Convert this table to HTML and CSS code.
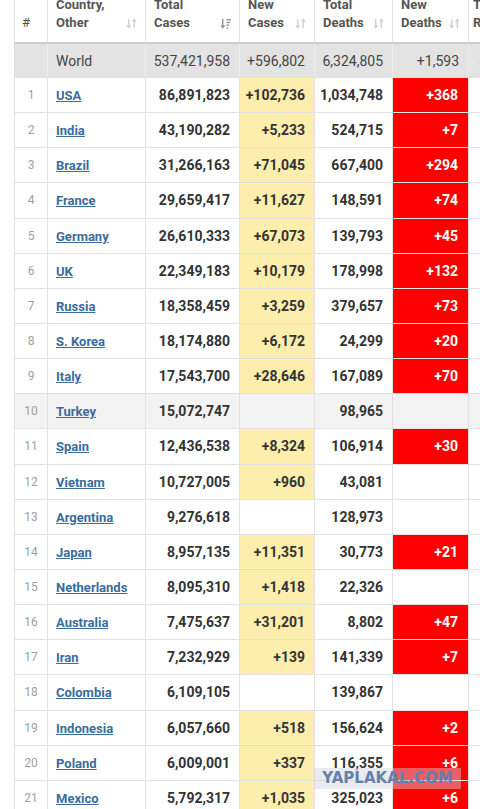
FILE: index.html
```html
<!DOCTYPE html>
<html lang="en">
<head>
  <meta charset="utf-8" />
  <title>Coronavirus Cases</title>
  <meta name="viewport" content="width=device-width, initial-scale=1" />
  <link rel="stylesheet" href="styles.css">
</head>
<body>
  <div class="page">
    <table class="main-table">
      <colgroup>
        <col class="c-rank" />
        <col class="c-country" />
        <col class="c-cases" />
        <col class="c-newcases" />
        <col class="c-deaths" />
        <col class="c-newdeaths" />
        <col class="c-recovered" />
      </colgroup>
      <thead>
        <tr>
          <th class="rank-head"><div class="th-wrap"><span>#</span></div></th>
          <th><div class="th-wrap"><span>Country,<br>Other</span>
            <svg class="sort" viewBox="0 0 12 12"><path d="M3 1v9M1 8l2 2.5L5 8M9 11V2M7 4l2-2.5L11 4" /></svg></div></th>
          <th><div class="th-wrap"><span>Total<br>Cases</span>
            <svg class="sort active" viewBox="0 0 12 12"><path d="M3 1v9M1 8l2 2.5L5 8" /><path class="bars" d="M7 2h5M7 5h4M7 8h3M7 11h2" /></svg></div></th>
          <th><div class="th-wrap"><span>New<br>Cases</span>
            <svg class="sort" viewBox="0 0 12 12"><path d="M3 1v9M1 8l2 2.5L5 8M9 11V2M7 4l2-2.5L11 4" /></svg></div></th>
          <th><div class="th-wrap"><span>Total<br>Deaths</span>
            <svg class="sort" viewBox="0 0 12 12"><path d="M3 1v9M1 8l2 2.5L5 8M9 11V2M7 4l2-2.5L11 4" /></svg></div></th>
          <th><div class="th-wrap"><span>New<br>Deaths</span>
            <svg class="sort" viewBox="0 0 12 12"><path d="M3 1v9M1 8l2 2.5L5 8M9 11V2M7 4l2-2.5L11 4" /></svg></div></th>
          <th class="rec-head"><div class="th-wrap"><span>Total<br>Recovered</span></div></th>
        </tr>
      </thead>
      <tbody>
        <tr class="world">
          <td></td>
          <td class="name">World</td>
          <td>537,421,958</td>
          <td>+596,802</td>
          <td>6,324,805</td>
          <td>+1,593</td>
          <td class="rec">511,703,826</td>
        </tr>
        <tr><td class="rank">1</td><td class="name"><a href="#">USA</a></td><td>86,891,823</td><td class="newc">+102,736</td><td>1,034,748</td><td class="newd">+368</td><td></td></tr>
        <tr><td class="rank">2</td><td class="name"><a href="#">India</a></td><td>43,190,282</td><td class="newc">+5,233</td><td>524,715</td><td class="newd">+7</td><td></td></tr>
        <tr><td class="rank">3</td><td class="name"><a href="#">Brazil</a></td><td>31,266,163</td><td class="newc">+71,045</td><td>667,400</td><td class="newd">+294</td><td></td></tr>
        <tr><td class="rank">4</td><td class="name"><a href="#">France</a></td><td>29,659,417</td><td class="newc">+11,627</td><td>148,591</td><td class="newd">+74</td><td></td></tr>
        <tr><td class="rank">5</td><td class="name"><a href="#">Germany</a></td><td>26,610,333</td><td class="newc">+67,073</td><td>139,793</td><td class="newd">+45</td><td></td></tr>
        <tr><td class="rank">6</td><td class="name"><a href="#">UK</a></td><td>22,349,183</td><td class="newc">+10,179</td><td>178,998</td><td class="newd">+132</td><td></td></tr>
        <tr><td class="rank">7</td><td class="name"><a href="#">Russia</a></td><td>18,358,459</td><td class="newc">+3,259</td><td>379,657</td><td class="newd">+73</td><td></td></tr>
        <tr><td class="rank">8</td><td class="name"><a href="#">S. Korea</a></td><td>18,174,880</td><td class="newc">+6,172</td><td>24,299</td><td class="newd">+20</td><td></td></tr>
        <tr><td class="rank">9</td><td class="name"><a href="#">Italy</a></td><td>17,543,700</td><td class="newc">+28,646</td><td>167,089</td><td class="newd">+70</td><td></td></tr>
        <tr class="shaded"><td class="rank">10</td><td class="name"><a href="#">Turkey</a></td><td>15,072,747</td><td></td><td>98,965</td><td></td><td></td></tr>
        <tr><td class="rank">11</td><td class="name"><a href="#">Spain</a></td><td>12,436,538</td><td class="newc">+8,324</td><td>106,914</td><td class="newd">+30</td><td></td></tr>
        <tr><td class="rank">12</td><td class="name"><a href="#">Vietnam</a></td><td>10,727,005</td><td class="newc">+960</td><td>43,081</td><td></td><td></td></tr>
        <tr><td class="rank">13</td><td class="name"><a href="#">Argentina</a></td><td>9,276,618</td><td></td><td>128,973</td><td></td><td></td></tr>
        <tr><td class="rank">14</td><td class="name"><a href="#">Japan</a></td><td>8,957,135</td><td class="newc">+11,351</td><td>30,773</td><td class="newd">+21</td><td></td></tr>
        <tr><td class="rank">15</td><td class="name"><a href="#">Netherlands</a></td><td>8,095,310</td><td class="newc">+1,418</td><td>22,326</td><td></td><td></td></tr>
        <tr><td class="rank">16</td><td class="name"><a href="#">Australia</a></td><td>7,475,637</td><td class="newc">+31,201</td><td>8,802</td><td class="newd">+47</td><td></td></tr>
        <tr><td class="rank">17</td><td class="name"><a href="#">Iran</a></td><td>7,232,929</td><td class="newc">+139</td><td>141,339</td><td class="newd">+7</td><td></td></tr>
        <tr><td class="rank">18</td><td class="name"><a href="#">Colombia</a></td><td>6,109,105</td><td></td><td>139,867</td><td></td><td></td></tr>
        <tr><td class="rank">19</td><td class="name"><a href="#">Indonesia</a></td><td>6,057,660</td><td class="newc">+518</td><td>156,624</td><td class="newd">+2</td><td></td></tr>
        <tr><td class="rank">20</td><td class="name"><a href="#">Poland</a></td><td>6,009,001</td><td class="newc">+337</td><td>116,355</td><td class="newd">+6</td><td></td></tr>
        <tr><td class="rank">21</td><td class="name"><a href="#">Mexico</a></td><td>5,792,317</td><td class="newc">+1,035</td><td>325,023</td><td class="newd">+6</td><td></td></tr>
      </tbody>
    </table>
    <div class="watermark">YAPLAKAL.COM</div>
  </div>
</body>
</html>
```

FILE: styles.css
```css
* {
  box-sizing: border-box;
  margin: 0;
  padding: 0;
}

body {
  background: #fff;
  font-family: Roboto, "Liberation Sans", Arial, sans-serif;
  color: #333;
}

.page {
  position: relative;
  width: 480px;
  height: 809px;
  overflow: hidden;
  padding-left: 14px;
}

.main-table {
  table-layout: fixed;
  width: 555px;
  margin-top: -4px;
  border-collapse: separate;
  border-spacing: 0;
  border-left: 1px solid #e0e0e0;
}

.c-rank { width: 33px; }
.c-country { width: 98px; }
.c-cases { width: 94px; }
.c-newcases { width: 75px; }
.c-deaths { width: 78px; }
.c-newdeaths { width: 76px; }
.c-recovered { width: 101px; }

th {
  text-align: left;
  font-size: 13px;
  line-height: 18px;
  font-weight: bold;
  color: #555;
  padding: 0 8px 10px 8px;
  border-right: 1px solid #e2e2e2;
  border-bottom: 2px solid #cdcdcd;
  vertical-align: bottom;
}

.th-wrap {
  display: flex;
  justify-content: space-between;
  align-items: flex-end;
}

th.rank-head {
  padding-left: 7px;
  font-weight: normal;
}

th.rec-head {
  padding-left: 4px;
}

/* стрелки сортировки */
.sort {
  width: 11px;
  height: 11px;
  margin-bottom: 3px;
  flex-shrink: 0;
  fill: none;
  stroke: #d2d2d2;
  stroke-width: 1.6;
}

.sort.active {
  stroke: #9a9a9a;
}

td {
  height: 35.15px;
  font-size: 14px;
  font-weight: bold;
  text-align: right;
  padding: 0 9px 0 4px;
  border-right: 1px solid #e2e2e2;
  border-bottom: 1px solid #e2e2e2;
  white-space: nowrap;
}

tr.world td {
  height: 34px;
  background: #e3e3e3;
  font-weight: normal;
  color: #444;
  border-right-color: #ececec;
}

tr.shaded td {
  background: #f3f3f3;
}

td.rank {
  text-align: center;
  font-size: 12px;
  font-weight: normal;
  color: #a0a0a0;
  padding: 0;
}

td.name {
  text-align: left;
  padding-left: 8px;
}

td.name a {
  color: #3a6c9d;
  font-size: 13px;
  font-weight: bold;
  text-decoration: underline;
}

td.newc {
  background: #fdeeae;
}

td.newd {
  background: #ff0000;
  color: #fff;
  padding-right: 10px;
}

td.rec {
  text-align: left;
  padding-left: 10px;
  color: #888;
}

.watermark {
  position: absolute;
  left: 314px;
  top: 768px;
  width: 147px;
  height: 21px;
  background: rgba(208, 210, 222, 0.45);
  color: #6580ab;
  font-family: "DejaVu Sans", sans-serif;
  font-weight: bold;
  font-size: 15px;
  line-height: 21px;
  text-align: center;
  letter-spacing: 0;
}
```
